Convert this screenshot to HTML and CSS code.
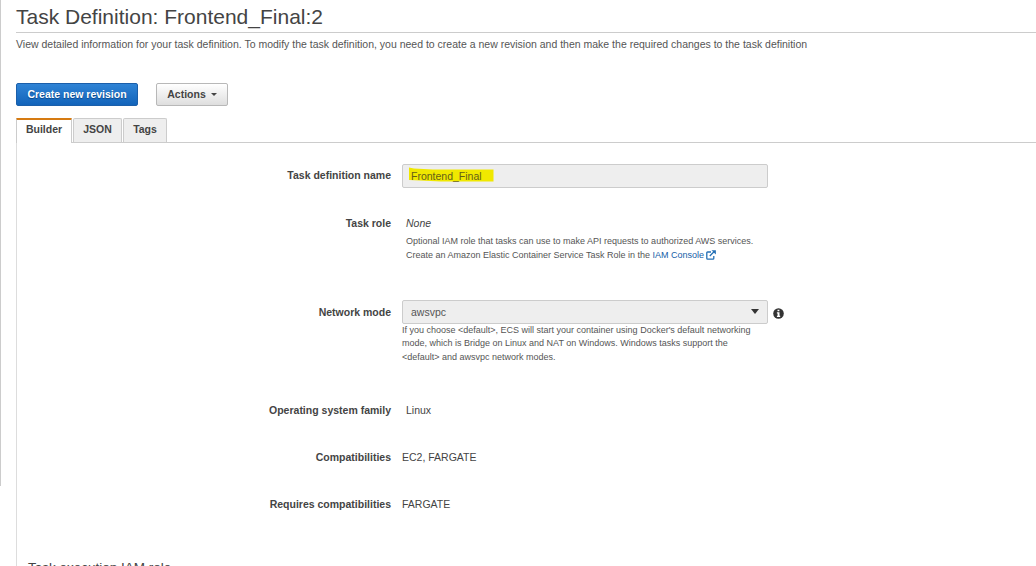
FILE: index.html
```html
<!DOCTYPE html>
<html lang="en">
<head>
<meta charset="utf-8">
<title>Task Definition: Frontend_Final:2</title>
<link rel="stylesheet" href="styles.css">
</head>
<body>
<div class="rail"></div>
<main class="page">
  <h1 class="title">Task Definition: Frontend_Final:2</h1>
  <p class="intro">View detailed information for your task definition. To modify the task definition, you need to create a new revision and then make the required changes to the task definition</p>
  <div class="toolbar">
    <button class="btn btn-primary">Create new revision</button>
    <button class="btn btn-default">Actions <span class="caret"></span></button>
  </div>
  <nav class="tabs">
    <a class="tab tab-active">Builder</a>
    <a class="tab tab-json">JSON</a>
    <a class="tab tab-tags">Tags</a>
  </nav>
  <section class="panel">
    <div class="row row-name">
      <label class="label">Task definition name</label>
      <div class="field">
        <div class="control"><span class="marker"><svg class="marker-ink" width="86" height="16" viewBox="0 0 86 16"><path d="M1 0.500L6 1.500L25 2.500H85.500V14.500H33L1 13Z" fill="#f0e800"/></svg><span class="marker-text">Frontend_Final</span></span></div>
      </div>
    </div>
    <div class="row row-role">
      <label class="label">Task role</label>
      <div class="field field-inset">
        <div class="value"><em>None</em></div>
        <div class="help help-role">Optional IAM role that tasks can use to make API requests to authorized AWS services.<br>Create an Amazon Elastic Container Service Task Role in the <a class="link">IAM Console <svg class="external" width="10" height="10" viewBox="0 0 10 10" fill="none" stroke="#236fb5" stroke-width="1.300"><path d="M5 2H1.600Q.8 2 .8 2.800V8.300Q.8 9.200 1.600 9.200H6.900Q7.800 9.200 7.800 8.300V6M3.800 6L8 1.800"/><path d="M5.500.2H9.900V4.600Z" fill="#236fb5" stroke="none"/></svg></a></div>
      </div>
    </div>
    <div class="row row-network">
      <label class="label">Network mode</label>
      <div class="field">
        <div class="select-line">
          <div class="control select"><span>awsvpc</span><span class="arrow"></span></div>
          <svg class="info" width="11" height="11" viewBox="0 0 11 11"><circle cx="5.500" cy="5.500" r="5.300" fill="#333"/><path d="M4.500 1.700H6.400V3.300H4.500ZM3.900 4.300H6.500V7.800H7.200V9H3.900V7.800H4.600V5.500H3.900Z" fill="#fff"/></svg>
        </div>
        <div class="help help-network">If you choose &lt;default&gt;, ECS will start your container using Docker's default networking<br>mode, which is Bridge on Linux and NAT on Windows. Windows tasks support the<br>&lt;default&gt; and awsvpc network modes.</div>
      </div>
    </div>
    <div class="row row-simple">
      <label class="label">Operating system family</label>
      <div class="field field-inset value">Linux</div>
    </div>
    <div class="row row-simple">
      <label class="label">Compatibilities</label>
      <div class="field value">EC2, FARGATE</div>
    </div>
    <div class="row row-last">
      <label class="label">Requires compatibilities</label>
      <div class="field value">FARGATE</div>
    </div>
    <h2 class="section-title">Task execution IAM role</h2>
  </section>
</main>
</body>
</html>
```
FILE: styles.css
```css
* { box-sizing: border-box; }
html, body { height: 100%; }
body {
  margin: 0;
  overflow: hidden;
  display: flex;
  align-items: flex-start;
  background: #fff;
  color: #444;
  font: 10.5px/14px "Liberation Sans", Arial, sans-serif;
}
.rail { width: 1px; height: 486px; background: #ccc; }
.page { flex: 1; height: 566px; padding-left: 15px; display: flex; flex-direction: column; overflow: hidden; }
.title {
  margin: 0;
  height: 33px;
  flex-shrink: 0;
  padding-top: 4px;
  border-bottom: 1px solid #ccc;
  font-size: 21px;
  font-weight: 400;
  line-height: 26px;
}
.intro { margin: 0; height: 50px; flex-shrink: 0; padding-top: 4px; color: #555; }
.toolbar { display: flex; gap: 18px; height: 35px; flex-shrink: 0; align-items: flex-start; }
.btn {
  height: 23px;
  padding: 0 0 2px;
  display: flex;
  align-items: center;
  justify-content: center;
  border-radius: 2px;
  font: bold 10.5px/14px "Liberation Sans", Arial, sans-serif;
}
.btn-primary { width: 122px; color: #fff; border: 1px solid #1b5faa; background: linear-gradient(#2f83d5, #1264ba); text-shadow: 0 1px 1px #0b4585; }
.btn-default { width: 72px; gap: 5px; color: #444; border: 1px solid #b8b8b8; background: linear-gradient(#fff, #dedede); }
.caret { margin-top: 2px; border: 3px solid transparent; border-top-color: #444; border-bottom: 0; }
.tabs { display: flex; gap: 1px; height: 25px; flex-shrink: 0; border-bottom: 1px solid #ccc; }
.tab {
  height: 24px;
  padding-top: 3px;
  text-align: center;
  font-weight: bold;
  background: #eee;
  border: 1px solid #ccc;
  border-bottom: 0;
  border-radius: 2px 2px 0 0;
}
.tab-active { width: 56px; height: 25px; padding-top: 2px; background: #fff; border-top: 2px solid #d67b12; border-radius: 1px 1px 0 0; }
.tab-json { width: 49px; }
.tab-tags { width: 44px; }
.panel { flex: 1; border-left: 1px solid #ddd; padding-top: 21px; }
.row { display: grid; grid-template-columns: 374px 366px; column-gap: 11px; }
.label { text-align: right; font-weight: bold; }
.field { min-width: 0; }
.field-inset { padding-left: 4px; }
.row-name { height: 52px; }
.row-name .label { padding-top: 4px; }
.control { width: 366px; height: 24px; padding: 0 8px; display: flex; align-items: center; background: #eee; border: 1px solid #ccc; border-radius: 2px; color: #555; }
.marker { position: relative; }
.marker-ink { position: absolute; left: -3px; top: -2px; }
.marker-text { position: relative; color: #645f18; }
.row-role { height: 84px; }
.help { font-size: 9px; line-height: 13.5px; color: #555; white-space: nowrap; }
.help-role { padding-top: 4px; line-height: 14px; }
.help-network { line-height: 13.4px; }
.link { color: #155ea8; }
.external { vertical-align: -2px; margin-left: -1px; }
.row-network { height: 103px; }
.row-network .label { padding-top: 5px; }
.select-line { display: flex; width: 382px; gap: 5px; align-items: center; }
.select { justify-content: space-between; flex-shrink: 0; }
.arrow { border: 4.5px solid transparent; border-top: 5px solid #333; border-bottom: 0; margin-top: -1px; }
.info { flex-shrink: 0; margin-top: 2px; }
.row-simple { height: 47px; }
.row-last { height: 62px; }
.section-title { margin: 0; padding-left: 11px; font-size: 13.5px; line-height: 18px; font-weight: 400; }
```
